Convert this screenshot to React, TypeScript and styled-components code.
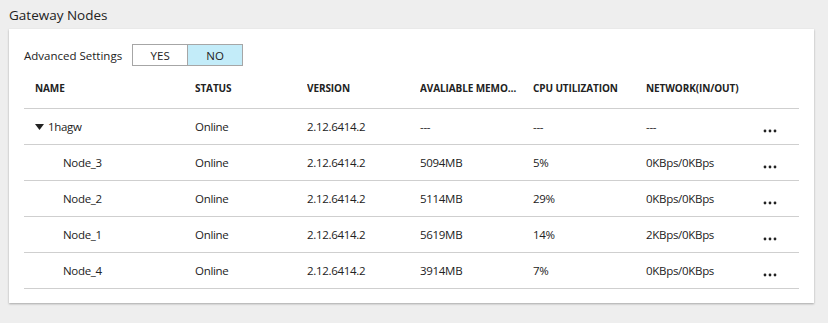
import { createGlobalStyle, styled } from "styled-components";

interface NodeRow {
  name: string;
  status: string;
  version: string;
  memory: string;
  cpu: string;
  network: string;
  group?: boolean;
}

const rows: NodeRow[] = [
  { name: "1hagw", status: "Online", version: "2.12.6414.2", memory: "---", cpu: "---", network: "---", group: true },
  { name: "Node_3", status: "Online", version: "2.12.6414.2", memory: "5094MB", cpu: "5%", network: "0KBps/0KBps" },
  { name: "Node_2", status: "Online", version: "2.12.6414.2", memory: "5114MB", cpu: "29%", network: "0KBps/0KBps" },
  { name: "Node_1", status: "Online", version: "2.12.6414.2", memory: "5619MB", cpu: "14%", network: "2KBps/0KBps" },
  { name: "Node_4", status: "Online", version: "2.12.6414.2", memory: "3914MB", cpu: "7%", network: "0KBps/0KBps" },
];

const App = () => {
  return (
    <Page>
      <GlobalStyle />
      <Title>Gateway Nodes</Title>
      <Card>
        <Settings>
          <span>Advanced Settings</span>
          <Toggle>
            <ToggleBtn>YES</ToggleBtn>
            <ToggleBtn $active>NO</ToggleBtn>
          </Toggle>
        </Settings>
        <div>
          <HeadRow>
            <HeadCell>Name</HeadCell>
            <HeadCell>Status</HeadCell>
            <HeadCell>Version</HeadCell>
            <HeadCell>Avaliable Memory</HeadCell>
            <HeadCell>CPU Utilization</HeadCell>
            <HeadCell>Network(In/Out)</HeadCell>
            <HeadCell />
          </HeadRow>
          {rows.map((row) => (
            <Row key={row.name}>
              <NameCell $child={!row.group}>
                {row.group && (
                  <Caret width="9" height="6" viewBox="0 0 9 6">
                    <path d="M0 0 L9 0 L4.5 6 Z" fill="#222" />
                  </Caret>
                )}
                {row.name}
              </NameCell>
              <Cell>{row.status}</Cell>
              <Cell>{row.version}</Cell>
              <Cell>{row.memory}</Cell>
              <Cell>{row.cpu}</Cell>
              <Cell>{row.network}</Cell>
              <More>
                <svg width="14" height="4" viewBox="0 0 14 4">
                  <circle cx="2" cy="2" r="1.4" fill="#222" />
                  <circle cx="7" cy="2" r="1.4" fill="#222" />
                  <circle cx="12" cy="2" r="1.4" fill="#222" />
                </svg>
              </More>
            </Row>
          ))}
        </div>
      </Card>
    </Page>
  );
};

export default App;

const GlobalStyle = createGlobalStyle`
  body {
    margin: 0;
    background: #eeeeee;
    font-family: "Open Sans", "Noto Sans", sans-serif;
    color: #222;
  }
`;

const Page = styled.div`
  width: 828px;
  height: 323px;
  padding: 6px 14px 0 9px;
  box-sizing: border-box;
`;

const Title = styled.div`
  font-size: 13.5px;
  line-height: 18px;
  height: 23px;
  color: #222;
`;

const Card = styled.div`
  background: #fff;
  padding: 15px 15px 14px 15px;
  box-shadow: 0 1px 2px rgba(0, 0, 0, 0.3);
`;

const Settings = styled.div`
  display: flex;
  align-items: center;
  gap: 10px;
  font-size: 11.5px;
`;

const Toggle = styled.div`
  display: flex;
  border: 1px solid #a6a6a6;
`;

const ToggleBtn = styled.div<{ $active?: boolean }>`
  width: 54px;
  height: 20px;
  display: flex;
  align-items: center;
  justify-content: center;
  font-size: 11.5px;
  background: ${(p) => (p.$active ? "#c3ecf9" : "#fff")};
  & + & {
    border-left: 1px solid #a6a6a6;
  }
`;

const Grid = styled.div`
  display: grid;
  grid-template-columns: 160px 112px 113px 113px 113px 117px 1fr;
  padding-left: 11px;
  border-bottom: 1px solid #cfcfcf;
`;

const HeadRow = styled(Grid)`
  height: 41px;
  padding-top: 1px;
  align-items: center;
`;

const HeadCell = styled.div`
  font-size: 10px;
  font-weight: 700;
  text-transform: uppercase;
  white-space: nowrap;
  overflow: hidden;
  text-overflow: ellipsis;
  padding-right: 14px;
  letter-spacing: -0.1px;
`;

const Row = styled(Grid)`
  height: 35px;
  align-items: center;
  font-size: 11.5px;
  letter-spacing: -0.3px;
`;

const Cell = styled.div`
  white-space: nowrap;
`;

const NameCell = styled(Cell)<{ $child?: boolean }>`
  display: flex;
  align-items: center;
  padding-left: ${(p) => (p.$child ? "28px" : "0")};
`;

const Caret = styled.svg`
  margin-right: 4px;
`;

const More = styled.div`
  padding-top: 8px;
  display: flex;
`;
